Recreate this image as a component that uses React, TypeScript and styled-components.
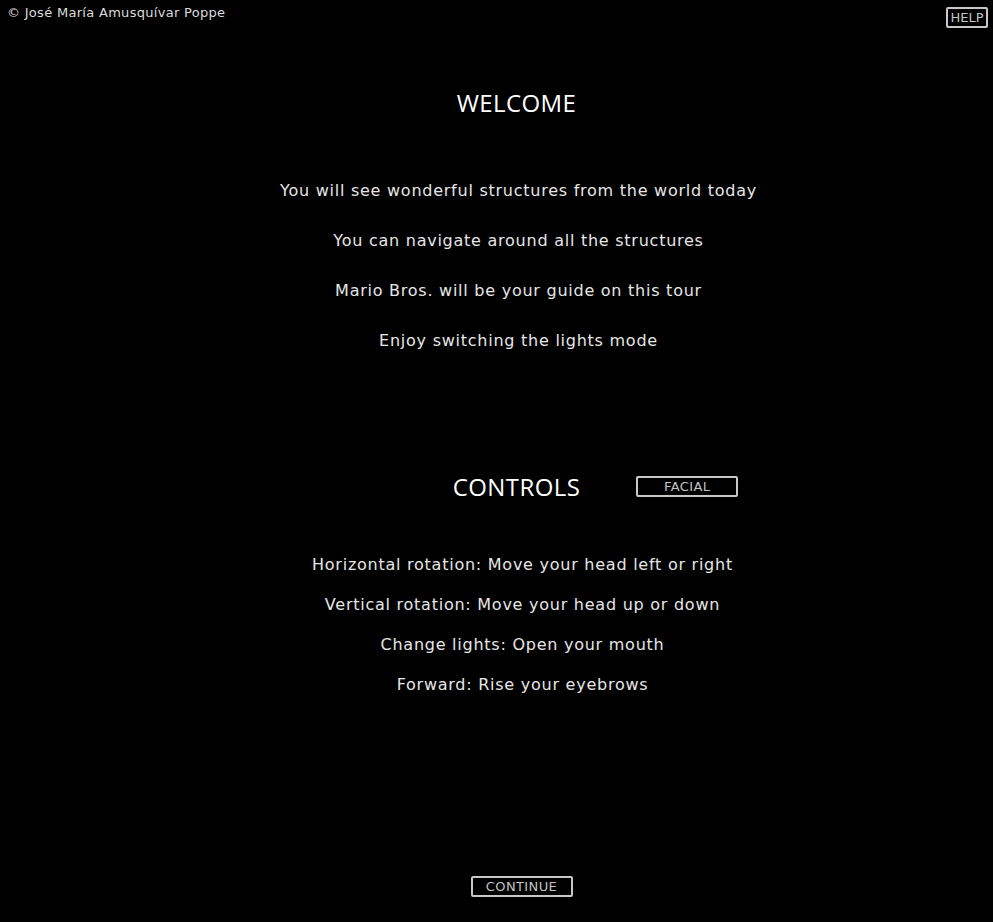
import React from "react";
import styled, { createGlobalStyle } from "styled-components";

const Global = createGlobalStyle`
  html, body { margin: 0; padding: 0; background: #000; }
  body { font-family: "DejaVu Sans", Verdana, sans-serif; color: #e6e6e6; }
`;

const Page = styled.div`
  width: 993px;
  height: 922px;
  background: #000;
  display: flex;
  flex-direction: column;
`;

const TopBar = styled.div`
  display: flex;
  justify-content: space-between;
  align-items: flex-start;
  height: 28px;
  padding: 0 5px 0 7px;
`;

const Copy = styled.div`
  font-size: 13px;
  line-height: 16px;
  margin-top: 5px;
  letter-spacing: 0.3px;
  color: #dcdcdc;
`;

const BoxButton = styled.button<{ $w: number }>`
  width: ${(p) => p.$w}px;
  height: 21px;
  box-sizing: border-box;
  background: #000;
  border: 2px solid #c8c8c8;
  border-radius: 2px;
  color: #c4c4c4;
  font-family: "DejaVu Sans", Verdana, sans-serif;
  font-size: 13px;
  letter-spacing: 0.4px;
  line-height: 15px;
  padding: 0;
  display: flex;
  align-items: center;
  justify-content: center;
  cursor: pointer;
`;

const HelpButton = styled(BoxButton)`
  margin-top: 7px;
  letter-spacing: 0;
`;

const Column = styled.div<{ $shift: number; $top?: number }>`
  display: flex;
  flex-direction: column;
  align-items: center;
  padding-left: ${(p) => p.$shift}px;
  margin-top: ${(p) => p.$top ?? 0}px;
`;

const Heading = styled.h1<{ $top: number }>`
  margin: ${(p) => p.$top}px 0 0;
  font-family: "Open Sans", sans-serif;
  font-weight: 400;
  font-size: 24px;
  line-height: 30px;
  color: #fff;
  letter-spacing: 0.4px;
`;

const Lines = styled.div<{ $top: number; $lh: number; $shift: number }>`
  margin-top: ${(p) => p.$top}px;
  padding-left: ${(p) => p.$shift}px;
  display: flex;
  flex-direction: column;
  align-items: center;
  & > p {
    margin: 0;
    font-size: 16px;
    line-height: ${(p) => p.$lh}px;
    letter-spacing: 0.75px;
    color: #e6e6e6;
  }
`;

const ControlsRow = styled.div`
  margin-top: 106px;
  display: grid;
  grid-template-columns: 1fr auto 1fr;
  align-items: center;
  width: 100%;
  height: 30px;
`;

const RowHeading = styled(Heading)`
  grid-column: 2;
`;

const FacialSlot = styled.div`
  grid-column: 3;
  padding-left: 56px;
  padding-bottom: 2px;
  display: flex;
`;

export default function App() {
  return (
    <>
      <Global />
      <Page>
        <TopBar>
          <Copy>© José María Amusquívar Poppe</Copy>
          <HelpButton $w={42}>HELP</HelpButton>
        </TopBar>
        <Column $shift={40}>
          <Heading $top={60}>WELCOME</Heading>
          <Lines $top={48} $lh={50} $shift={4}>
            <p>You will see wonderful structures from the world today</p>
            <p>You can navigate around all the structures</p>
            <p>Mario Bros. will be your guide on this tour</p>
            <p>Enjoy switching the lights mode</p>
          </Lines>
          <ControlsRow>
            <RowHeading $top={0}>CONTROLS</RowHeading>
            <FacialSlot>
              <BoxButton $w={102}>FACIAL</BoxButton>
            </FacialSlot>
          </ControlsRow>
          <Lines $top={43} $lh={40} $shift={12}>
            <p>Horizontal rotation: Move your head left or right</p>
            <p>Vertical rotation: Move your head up or down</p>
            <p>Change lights: Open your mouth</p>
            <p>Forward: Rise your eyebrows</p>
          </Lines>
        </Column>
        <Column $shift={50} $top={171}>
          <BoxButton $w={102}>CONTINUE</BoxButton>
        </Column>
      </Page>
    </>
  );
}
